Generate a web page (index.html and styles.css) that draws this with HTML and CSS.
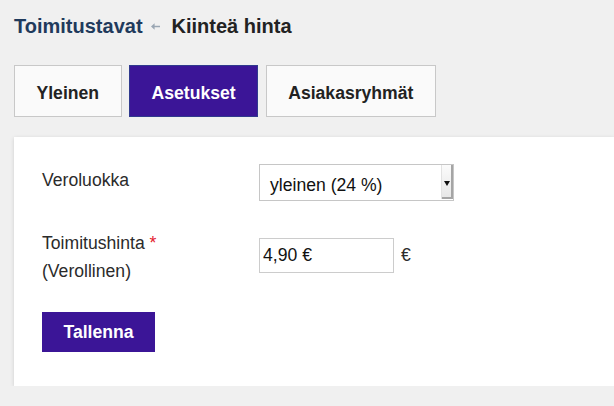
FILE: index.html
```html
<!DOCTYPE html>
<html lang="fi">
<head>
<meta charset="utf-8">
<title>Kiinteä hinta</title>
<link rel="stylesheet" href="styles.css">
</head>
<body>
<div class="page">
  <nav class="breadcrumb">
    <a class="breadcrumb-link" href="#">Toimitustavat</a>
    <svg class="breadcrumb-sep" width="9" height="7" viewBox="0 0 9 7" aria-hidden="true">
      <path d="M0 3.5 L3.6 0.3 L3.6 2.7 L9 2.7 L9 4.3 L3.6 4.3 L3.6 6.7 Z" fill="#9aa6b3"/>
    </svg>
    <span class="breadcrumb-current">Kiinteä hinta</span>
  </nav>

  <div class="tabs">
    <a class="tab" href="#">Yleinen</a>
    <a class="tab tab--active" href="#">Asetukset</a>
    <a class="tab" href="#">Asiakasryhmät</a>
  </div>

  <section class="panel">
    <div class="form-row form-row--select">
      <div class="form-label">Veroluokka</div>
      <div class="select-box">
        <span class="select-value">yleinen (24 %)</span>
        <span class="select-button"><span class="select-caret"></span></span>
      </div>
    </div>

    <div class="form-row form-row--price">
      <div class="form-label">Toimitushinta <span class="required">*</span><br>(Verollinen)</div>
      <div class="control-group">
        <input class="text-input" type="text" value="4,90 €">
        <span class="unit">€</span>
      </div>
    </div>

    <button class="save-button" type="button">Tallenna</button>
  </section>
</div>
</body>
</html>
```

FILE: styles.css
```css
html, body {
  margin: 0;
  padding: 0;
}

body {
  background: #f0f0f0;
  font-family: "Liberation Sans", Arial, sans-serif;
  color: #2b2b2b;
}

.page {
  padding: 14px 0 0 14px;
}

.breadcrumb {
  display: flex;
  align-items: center;
  font-size: 20px;
  font-weight: bold;
  line-height: 24px;
}

.breadcrumb-link {
  color: #1f3a5c;
  text-decoration: none;
}

.breadcrumb-sep {
  display: block;
  margin: 0 12px 0 8px;
}

.breadcrumb-current {
  color: #222;
}

.tabs {
  display: flex;
  gap: 7.5px;
  margin-top: 27px;
}

.tab {
  display: block;
  border: 1px solid #c8c8c8;
  background: #fafafa;
  padding: 17px 21.5px 13px;
  line-height: 20px;
  font-size: 17.6px;
  font-weight: bold;
  color: #222;
  text-decoration: none;
}

.tab--active {
  background: #3b1597;
  border-color: #303a8e;
  color: #fff;
}

.panel {
  margin-top: 20px;
  background: #fff;
  box-shadow: 0 1px 4px rgba(0, 0, 0, 0.14);
  padding: 27px 28px 34px;
}

.form-row {
  display: flex;
  align-items: flex-start;
}

.form-row + .form-row {
  margin-top: 28px;
}

.form-label {
  width: 217px;
  flex: none;
  font-size: 17.6px;
  line-height: 28px;
  color: #2b2b2b;
}

.form-row--select .form-label {
  padding-top: 2px;
}

.required {
  color: #e4202e;
}

.select-box {
  display: flex;
  box-sizing: border-box;
  width: 195px;
  height: 37px;
  border: 1px solid #c6c6c6;
  background: #fff;
}

.select-value {
  flex: 1;
  padding: 5px 0 0 10px;
  font-size: 17.6px;
  line-height: 30px;
  color: #111;
}

.select-button {
  display: flex;
  align-items: center;
  justify-content: center;
  width: 11px;
  margin-bottom: 1px;
  background: linear-gradient(#fbfbfb, #e6e6e6);
  border-left: 1px solid #e2e2e2;
  box-shadow: inset -2px -2px 0 #a5a5a5;
}

.select-caret {
  display: block;
  width: 0;
  height: 0;
  margin: 2px 2px 0 0;
  border-top: 5px solid #111;
  border-left: 3.5px solid transparent;
  border-right: 3.5px solid transparent;
}

.control-group {
  display: flex;
  align-items: center;
  margin-top: 9px;
}

.text-input {
  box-sizing: border-box;
  width: 135px;
  height: 35px;
  margin: 0;
  padding: 0 3px;
  border: 1px solid #cccccc;
  font-family: inherit;
  font-size: 17.6px;
  color: #111;
  background: #fff;
  outline: none;
}

.unit {
  margin-left: 7px;
  font-size: 17.6px;
  color: #2b2b2b;
}

.save-button {
  display: block;
  margin-top: 27px;
  height: 40px;
  padding: 0 21.5px;
  border: 0;
  background: #3b1597;
  color: #fff;
  font-family: inherit;
  font-size: 17.6px;
  font-weight: bold;
  line-height: 40px;
}
```
